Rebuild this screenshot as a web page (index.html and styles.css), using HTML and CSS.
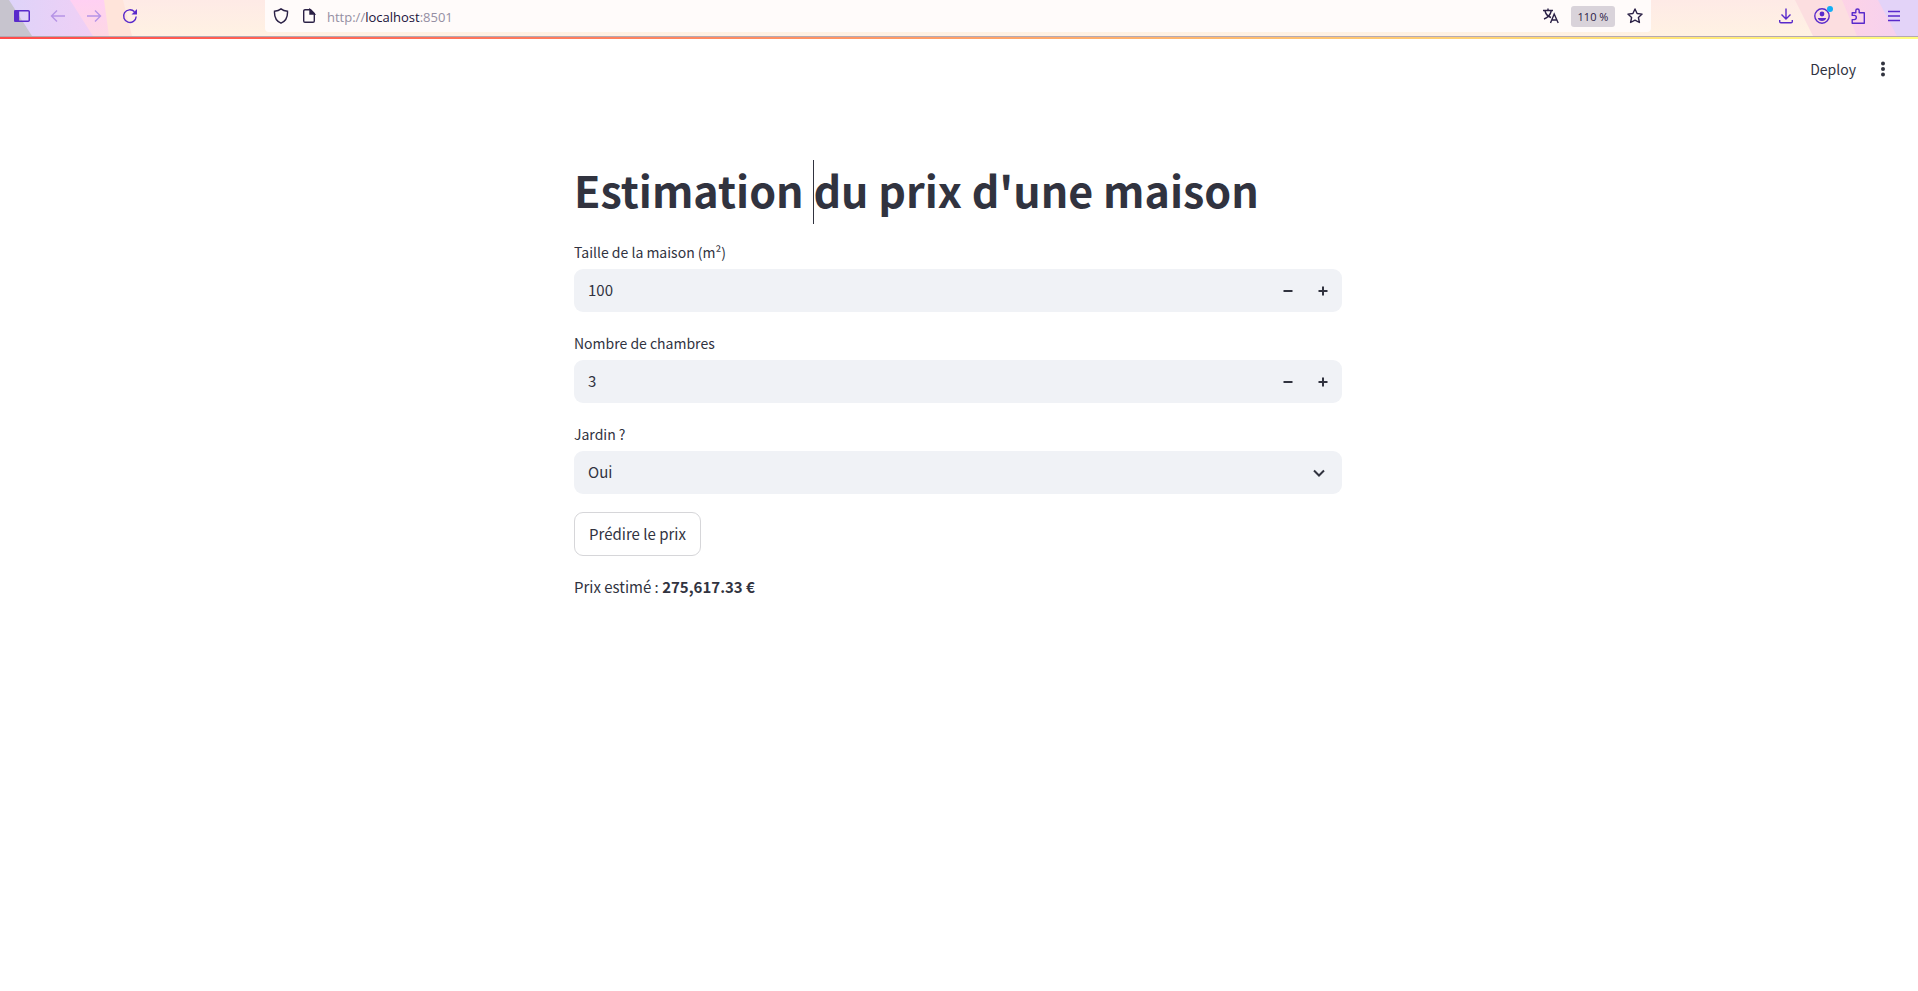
FILE: index.html
```html
<!DOCTYPE html>
<html lang="fr">
<head>
<meta charset="utf-8">
<meta name="viewport" content="width=device-width, initial-scale=1">
<title>Estimation du prix d'une maison</title>
<link rel="stylesheet" href="styles.css">
</head>
<body>
<nav class="toolbar" aria-label="Navigateur">
  <svg class="theme theme-left" width="133" height="36" viewBox="0 0 133 36" aria-hidden="true">
    <defs>
      <linearGradient id="tl" x1="0" y1="0" x2="1" y2="0"><stop offset="0" stop-color="#dcd4fa"/><stop offset="1" stop-color="#f0cff5"/></linearGradient>
      <linearGradient id="tp" x1="0" y1="0" x2="0" y2="1"><stop offset="0" stop-color="#ffd0f3"/><stop offset="1" stop-color="#fdd8e4"/></linearGradient>
    </defs>
    <path fill="#ffe4da" d="M0 0H123L132 36H0Z"/>
    <path fill="url(#tp)" d="M0 0H104L109 36H0Z"/>
    <path fill="url(#tl)" d="M0 0H70L93 36H0Z"/>
    <path fill="#c7c4ce" d="M0 0H9L32 36H0Z"/>
  </svg>
  <svg class="theme theme-right" width="130" height="36" viewBox="0 0 130 36" aria-hidden="true">
    <defs>
      <linearGradient id="tr" x1="0" y1="0" x2="1" y2="0"><stop offset="0" stop-color="#fdd3e6"/><stop offset="1" stop-color="#f3d0f2"/></linearGradient>
    </defs>
    <path fill="#fcdee0" d="M7 0H130V36H25Z"/>
    <path fill="url(#tr)" d="M54 0H130V36H69Z"/>
    <path fill="#e3d3f8" d="M90 0H130V36H109Z"/>
  </svg>
  <div class="nav-buttons">
    <button class="tool" aria-label="Panneau latéral"><svg width="16" height="16" viewBox="0 0 16 16"><rect x=".75" y="2.75" width="14.5" height="10.5" rx="1" fill="none" stroke="currentColor" stroke-width="1.5"/><path d="M1 3h3.500v10H1z" fill="currentColor"/></svg></button>
    <button class="tool" disabled aria-label="Précédent"><svg width="16" height="16" viewBox="0 0 16 16"><path d="M15 8H1.500M7 2.500 1.500 8 7 13.500"/></svg></button>
    <button class="tool" disabled aria-label="Suivant"><svg width="16" height="16" viewBox="0 0 16 16"><path d="M1 8h13.500M9 2.500 14.500 8 9 13.500"/></svg></button>
    <button class="tool" aria-label="Actualiser"><svg width="16" height="16" viewBox="0 0 16 16"><path d="M14.200 8.500A6.300 6.300 0 1 1 12.500 3.800"/><path d="M15 1v5.500H9.500z" fill="currentColor" stroke="none"/></svg></button>
  </div>
  <div class="address">
    <svg width="16" height="16" viewBox="0 0 16 16" aria-hidden="true"><path d="M8 .9C6.300 2.300 4.200 3 1.500 3.200 1.200 8.500 3 13 8 15.200c5-2.200 6.800-6.700 6.500-12C11.800 3 9.700 2.300 8 .9Z"/></svg>
    <svg width="16" height="16" viewBox="0 0 16 16" aria-hidden="true"><path d="M9.500 1.700H4A1.300 1.300 0 0 0 2.700 3v10A1.300 1.300 0 0 0 4 14.300h8a1.300 1.300 0 0 0 1.300-1.300V5.500Z"/><path d="M9 1.500V6h4.500z" fill="currentColor"/></svg>
    <span class="url">http://<b>localhost</b>:8501</span>
    <button class="tool" aria-label="Traduire"><svg width="16" height="16" viewBox="0 0 16 16"><path d="M0 2.500h10M5 .5v2M2 3c.8 3 3 5.500 6 6.500M8.200 3C7.500 6.500 5 9.500 1 11M7.500 15l3.700-9 4 9M8.800 12h5"/></svg></button>
    <button class="zoom-level">110 %</button>
    <button class="tool" aria-label="Marque-page"><svg width="16" height="16" viewBox="0 0 16 16"><path stroke-linejoin="round" d="m8 1 2.100 4.500 5 .6-3.700 3.400 1 5L8 12.100l-4.400 2.400 1-5L.9 6.100l5-.6Z"/></svg></button>
  </div>
  <div class="actions">
    <button class="tool" aria-label="Téléchargements"><svg width="16" height="16" viewBox="0 0 16 16"><path d="M8 .5v10M3.500 6.500 8 11l4.500-4.500M1.700 12v1.500q0 1.200 1.200 1.200h10.200q1.200 0 1.200-1.200V12"/></svg></button>
    <button class="tool account" aria-label="Compte"><svg width="16" height="16" viewBox="0 0 16 16"><circle cx="8" cy="8" r="7.200"/><circle cx="8" cy="6" r="2.400" fill="currentColor" stroke="none"/><path d="M3.800 10h8.400c-.4 1.800-2 3-4.200 3s-3.800-1.200-4.200-3Z" fill="currentColor" stroke="none"/></svg><span class="badge"></span></button>
    <button class="tool" aria-label="Extensions"><svg width="16" height="16" viewBox="0 0 16 16"><path stroke-linejoin="round" d="M2.200 7.400V4.800h3.600V2.700a1.700 1.700 0 0 1 3.400 0v2.100h5.100v10.400H2.200v-3.600h2a1.900 1.900 0 0 0 0-4.200Z"/></svg></button>
    <button class="tool" aria-label="Menu"><svg width="16" height="16" viewBox="0 0 16 16"><path d="M2 3.500h12M2 8h12M2 12.500h12"/></svg></button>
  </div>
</nav>
<div class="decoration"></div>
<header class="app-header">
  <button class="deploy">Deploy</button>
  <button class="more" aria-label="Options"><svg width="18" height="18" viewBox="0 0 18 18"><circle cx="9" cy="3.500" r="2"/><circle cx="9" cy="9" r="2"/><circle cx="9" cy="14.500" r="2"/></svg></button>
</header>
<main class="content">
  <h1>Estimation <span class="caret"></span>du prix d'une maison</h1>
  <div class="field">
    <label for="size">Taille de la maison (m²)</label>
    <div class="control">
      <input id="size" type="text" inputmode="numeric" value="100">
      <button class="step" aria-label="Diminuer"><svg width="10" height="10" viewBox="0 0 10 10"><path d="M.5 5h9"/></svg></button>
      <button class="step" aria-label="Augmenter"><svg width="10" height="10" viewBox="0 0 10 10"><path d="M.5 5h9M5 .5v9"/></svg></button>
    </div>
  </div>
  <div class="field">
    <label for="rooms">Nombre de chambres</label>
    <div class="control">
      <input id="rooms" type="text" inputmode="numeric" value="3">
      <button class="step" aria-label="Diminuer"><svg width="10" height="10" viewBox="0 0 10 10"><path d="M.5 5h9"/></svg></button>
      <button class="step" aria-label="Augmenter"><svg width="10" height="10" viewBox="0 0 10 10"><path d="M.5 5h9M5 .5v9"/></svg></button>
    </div>
  </div>
  <div class="field">
    <label for="garden">Jardin ?</label>
    <div class="control">
      <select id="garden"><option>Oui</option><option>Non</option></select>
      <svg class="chevron" width="12" height="12" viewBox="0 0 12 12" aria-hidden="true"><path d="m1 3.500 5 5 5-5"/></svg>
    </div>
  </div>
  <button class="predict">Prédire le prix</button>
  <p class="result">Prix estimé : <strong>275,617.33 €</strong></p>
</main>
</body>
</html>
```
FILE: styles.css
```css
* { box-sizing: border-box; }
body {
  margin: 0;
  background: #fff;
  color: #31333f;
  font-family: "Noto Sans CJK SC", "Noto Sans", sans-serif;
  font-size: 15px;
}
button, input, select { font: inherit; color: inherit; border: 0; padding: 0; background: none; }
svg { display: block; flex: none; }

.toolbar {
  position: relative;
  display: flex;
  align-items: flex-start;
  height: 37px;
  border-bottom: 1px solid #b5a8b2;
  background: linear-gradient(#feeae6, #fff2e3);
  color: #592acb;
  font-family: "Open Sans", "Noto Sans", sans-serif;
}
.theme { position: absolute; top: 0; }
.theme-left { left: 0; }
.theme-right { right: 0; }
.tool { position: relative; display: grid; place-items: center; width: 16px; height: 32px; }
.tool svg, .address > svg { fill: none; stroke: currentColor; stroke-width: 1.4; }
.tool:disabled { color: #b694e6; }
.nav-buttons { position: relative; display: flex; gap: 20px; width: 265px; padding-left: 14px; }
.address {
  position: relative;
  display: flex;
  flex: 1;
  align-items: center;
  gap: 12px;
  height: 32px;
  padding: 0 8px;
  border-radius: 0 0 4px 4px;
  background: #fffbfa;
  color: #2b2146;
}
.url { flex: 1; margin-left: -2px; padding-top: 2px; color: #958fa3; font-size: 13px; line-height: 30px; }
.url b { color: #20123a; font-weight: 400; }
.zoom-level {
  width: 44px;
  height: 21px;
  border-radius: 3px;
  background: #d9d3da;
  font-size: 11px;
  line-height: 21px;
}
.actions { position: relative; display: flex; justify-content: flex-end; gap: 20px; width: 267px; padding-right: 16px; }
.badge { position: absolute; top: 6px; right: -3px; width: 6px; height: 6px; border-radius: 50%; background: #12aef5; }

.decoration { height: 2px; background: linear-gradient(90deg, #ff4b4b, #ffa067 50%, #fffd80); }
.app-header { display: flex; justify-content: flex-end; align-items: center; gap: 18px; height: 60px; padding-right: 26px; }
.deploy { font-size: 14px; line-height: 24px; }
.more svg { fill: #31333f; }

.content { display: flex; flex-direction: column; width: 100%; max-width: 770px; margin: 0 auto; padding: 54px 2px 0 0; }
h1 { margin: 0; padding: 4px 0 18px; font-size: 43px; font-weight: 700; line-height: 64px; }
.caret { position: relative; }
.caret::before { content: ""; position: absolute; top: 2px; left: 0; width: 1px; height: 64px; background: #31333f; }
.field { margin-bottom: 18px; }
.field label { display: block; padding-bottom: 4px; font-size: 14px; line-height: 26px; }
.control { position: relative; display: flex; align-items: center; height: 43px; border-radius: 9px; background: #f0f2f6; }
.control input, .control select { flex: 1; min-width: 0; height: 43px; padding: 0 14px 2px; outline: 0; appearance: none; }
.step { display: grid; place-items: center; width: 35px; height: 43px; }
.step:last-child { margin-right: 2px; }
.step svg { fill: none; stroke: #31333f; stroke-width: 2; }
.chevron { position: absolute; right: 17px; fill: none; stroke: #31333f; stroke-width: 2; pointer-events: none; }
.predict { align-self: flex-start; height: 44px; padding: 0 14px 2px; border: 1px solid #d6d6d9; border-radius: 9px; background: #fff; }
.result { margin: 18px 0 0; line-height: 26px; }
```
